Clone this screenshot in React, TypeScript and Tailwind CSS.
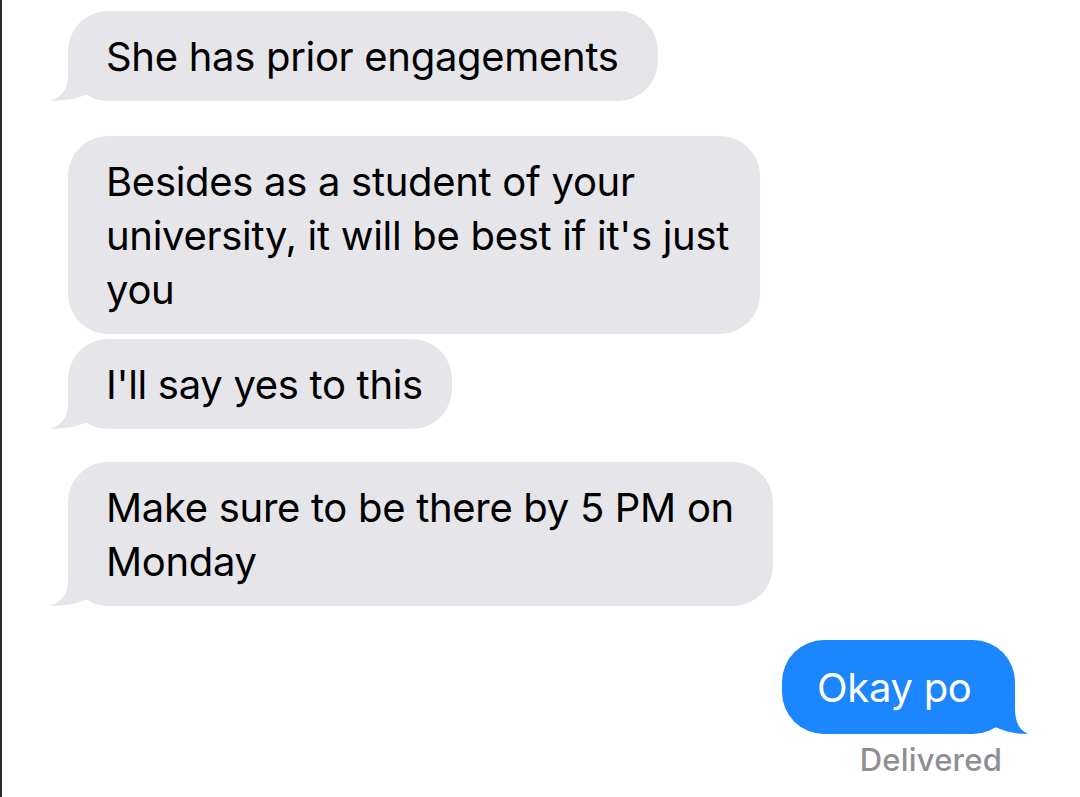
import React from "react";

const FONT = { fontFamily: "Inter, 'Liberation Sans', Arial, sans-serif" };

function LeftTail() {
  return (
    <svg
      className="absolute bottom-0 left-[-18px]"
      width="60"
      height="40"
      viewBox="0 0 60 40"
    >
      <path
        d="M18 0 L18 14 C18 28 12 36 0 39.5 C12 40.5 26 38 38 33 L60 20 L60 0 Z"
        fill="#e5e5ea"
      />
    </svg>
  );
}

function RightTail() {
  return (
    <svg
      className="absolute bottom-0 right-[-13px]"
      width="53"
      height="40"
      viewBox="0 0 53 40"
    >
      <path
        d="M40 0 L40 14 C40 28 44 36 53 39.5 C43 40.5 31 38 20 33 L0 20 L0 0 Z"
        fill="#1b86fd"
      />
    </svg>
  );
}

function Received({
  children,
  width,
  tail,
  className = "",
}: {
  children: React.ReactNode;
  width: string;
  tail?: boolean;
  className?: string;
}) {
  return (
    <div
      className={`relative whitespace-nowrap rounded-[40px] bg-[#e5e5ea] pt-[19px] pb-[17px] pl-[38px] pr-[10px] text-[40px] leading-[54px] tracking-[-0.3px] text-black ${width} ${className}`}
    >
      {tail && <LeftTail />}
      <span className="relative">{children}</span>
    </div>
  );
}

export default function App() {
  return (
    <div
      className="w-[1080px] h-[797px] bg-white border-l-2 border-[#2b2b2b] overflow-hidden"
      style={FONT}
    >
      <div className="flex flex-col pt-[11px] pl-[66px] pr-[65px]">
        <Received width="w-[590px]" tail>
          She has prior engagements
        </Received>
        <Received width="w-[692px]" className="mt-[35px]">
          Besides as a student of your
          <br />
          university, it will be best if it's just
          <br />
          you
        </Received>
        <Received width="w-[384px]" tail className="mt-[5px]">
          I'll say yes to this
        </Received>
        <Received width="w-[705px]" tail className="mt-[33px]">
          Make sure to be there by 5 PM on
          <br />
          Monday
        </Received>
        <div className="mt-[34px] flex flex-col items-end">
          <div className="relative w-[233px] whitespace-nowrap rounded-[42px] bg-[#1b86fd] pt-[21px] pb-[19px] pl-[35px] text-[40px] leading-[54px] tracking-[-0.3px] text-white">
            <RightTail />
            <span className="relative">Okay po</span>
          </div>
          <div className="mt-[8px] mr-[13px] text-[31px] leading-[36px] font-medium tracking-[0.2px] text-[#8e8e93]">
            Delivered
          </div>
        </div>
      </div>
    </div>
  );
}
